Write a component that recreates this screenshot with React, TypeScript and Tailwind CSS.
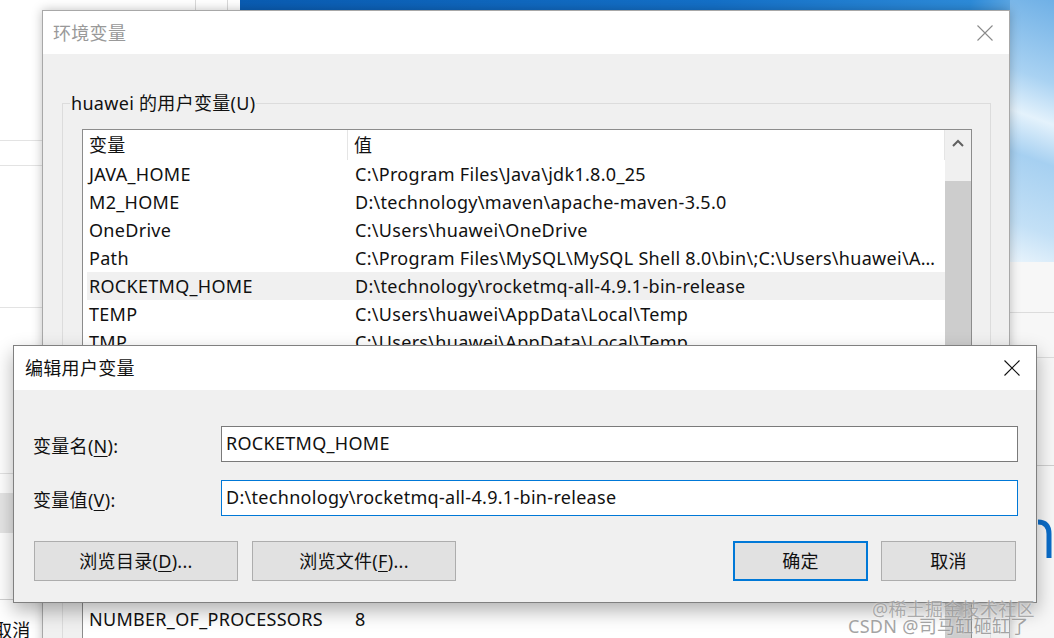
import React from 'react';

type Row = { name: string; value: string; selected?: boolean };

const userRows: Row[] = [
  { name: 'JAVA_HOME', value: 'C:\\Program Files\\Java\\jdk1.8.0_25' },
  { name: 'M2_HOME', value: 'D:\\technology\\maven\\apache-maven-3.5.0' },
  { name: 'OneDrive', value: 'C:\\Users\\huawei\\OneDrive' },
  { name: 'Path', value: 'C:\\Program Files\\MySQL\\MySQL Shell 8.0\\bin\\;C:\\Users\\huawei\\AppData\\Local\\Microsoft\\WindowsApps;' },
  { name: 'ROCKETMQ_HOME', value: 'D:\\technology\\rocketmq-all-4.9.1-bin-release', selected: true },
  { name: 'TEMP', value: 'C:\\Users\\huawei\\AppData\\Local\\Temp' },
  { name: 'TMP', value: 'C:\\Users\\huawei\\AppData\\Local\\Temp' },
];

const systemRows: Row[] = [
  { name: 'ComSpec', value: 'C:\\WINDOWS\\system32\\cmd.exe' },
  { name: 'DriverData', value: 'C:\\Windows\\System32\\Drivers\\DriverData' },
  { name: 'MAVEN_HOME', value: 'D:\\technology\\maven\\apache-maven-3.5.0' },
  { name: 'NUMBER_OF_PROCESSORS', value: '8' },
  { name: 'OS', value: 'Windows_NT' },
];

const CloseIcon = ({ color }: { color: string }) => (
  <svg width="16" height="16" viewBox="0 0 16 16" fill="none" stroke={color} strokeWidth="1.1">
    <path d="M0.5 0.5L15.5 15.5M15.5 0.5L0.5 15.5" />
  </svg>
);

const UpArrow = () => (
  <svg width="12" height="8" viewBox="0 0 12 8" fill="none" stroke="#606060" strokeWidth="2">
    <path d="M1 7L6 2L11 7" />
  </svg>
);

const U = ({ children }: { children: React.ReactNode }) => (
  <span className="underline underline-offset-[3px] decoration-1">{children}</span>
);

const ListView = ({ rows, height }: { rows: Row[]; height: string }) => (
  <div className={`flex border border-[#8c8c8c] bg-white ml-[19px] mr-[18px] ${height}`}>
    <div className="flex-1 flex flex-col overflow-hidden">
      <div className="h-[30px] flex shrink-0">
        <div className="w-[265px] pl-[6px] flex items-center border-r border-[#e5e5e5]">变量</div>
        <div className="flex-1 pl-[6px] flex items-center border-r border-[#e5e5e5]">值</div>
      </div>
      {rows.map((r) => (
        <div
          key={r.name}
          className={`ml-[4px] h-[28px] shrink-0 grid grid-cols-[261px_1fr] items-center ${r.selected ? 'bg-[#f0f0f0]' : ''}`}
        >
          <div className="pl-[2px] truncate">{r.name}</div>
          <div className="pl-[7px] truncate">{r.value}</div>
        </div>
      ))}
    </div>
    <div className="w-[26px] bg-[#f0f0f0] flex flex-col">
      <div className="h-[26px] flex items-center justify-center">
        <UpArrow />
      </div>
      <div className="mt-[25px] h-[200px] bg-[#cdcdcd]" />
    </div>
  </div>
);

const SmallButton = ({ label }: { label: string }) => (
  <div className="w-[88px] h-[30px] border border-[#adadad] bg-[#e1e1e1] flex items-center justify-center">{label}</div>
);

const DialogButton = ({ children, w, primary }: { children: React.ReactNode; w: string; primary?: boolean }) => (
  <div
    className={`${w} h-[40px] bg-[#e1e1e1] flex items-center justify-center ${
      primary ? 'border-2 border-[#0078d7]' : 'border border-[#adadad]'
    }`}
  >
    {children}
  </div>
);

export default function App() {
  return (
    <div className="relative w-[1054px] h-[638px] overflow-hidden bg-white font-['Noto_Sans','Noto_Sans_CJK_SC',sans-serif] text-[18px] tracking-[0.3px] text-[#111] leading-[24px]">
      {/* desktop wallpaper */}
      <div className="absolute left-[240px] top-0 w-[814px] h-[262px] bg-[linear-gradient(100deg,#0a5cb2_0%,#1470c8_55%,#2d8bd9_85%,#8fc4ee_95%,#b8dbf5_100%)]" />
      <div className="absolute left-[1010px] top-0 w-[44px] h-[262px] bg-[linear-gradient(200deg,#6fb0e6_0%,#a9d2f2_30%,#e4f2fc_45%,#a6d0f1_60%,#c3e0f6_85%,#e9f4fc_100%)]" />

      {/* window behind, left */}
      <div className="absolute left-0 top-0 w-[240px] h-[638px] bg-white">
        <div className="absolute left-[195px] top-0 h-[10px] border-l border-[#d9d9d9]" />
        <div className="absolute left-[227px] top-0 h-[10px] border-l border-[#d9d9d9]" />
        <div className="absolute left-0 top-[140px] w-[42px] border-t border-[#e3e3e3]" />
        <div className="absolute left-0 top-[165px] w-[42px] border-t border-[#e3e3e3]" />
        <div className="absolute left-0 top-[307px] w-[42px] border-t border-[#e3e3e3]" />
        <div className="absolute left-0 top-[473px] w-[42px] border-t border-[#e3e3e3]" />
        <div className="absolute left-0 top-[493px] w-[42px] h-[40px] bg-[#e6e6e6]" />
        <div className="absolute left-0 top-[599px] w-[42px] border-t border-[#d0d0d0]" />
        <div className="absolute left-[-6px] top-[618px]">取消</div>
      </div>

      {/* window behind, right */}
      <div className="absolute left-[1010px] top-[262px] w-[44px] h-[376px] bg-[#f7f7f7]">
        <div className="absolute left-0 top-[50px] w-full border-t border-[#dcdcdc]" />
        <div className="absolute left-0 top-[95px] w-full border-t border-[#dcdcdc]" />
        <div className="absolute left-0 top-[203px] w-full border-t border-[#cfcfcf]" />
        <svg className="absolute left-[26px] top-[256px]" width="18" height="42" viewBox="0 0 18 42" fill="none">
          <path d="M2 4Q13 4 13 16L13 40" stroke="#0a6cc8" strokeWidth="5" />
        </svg>
      </div>

      {/* 环境变量 */}
      <div className="absolute left-[42px] top-[10px] w-[968px] h-[700px] border border-[#a8a8a8] bg-[#f0f0f0] shadow-[0_0_10px_rgba(0,0,0,0.25)] flex flex-col">
        <div className="h-[43px] bg-white flex items-center justify-between pl-[10px] pr-[16px] shrink-0">
          <span className="text-[#999]">环境变量</span>
          <CloseIcon color="#8a8a8a" />
        </div>
        <div className="pt-[37px] pl-[19px] pr-[18px] flex flex-col">
          <fieldset className="border border-[#dcdcdc] pb-[14px]">
            <legend className="ml-[7px] px-[1px]">huawei 的用户变量(U)</legend>
            <div className="mt-[14px]">
              <ListView rows={userRows} height="h-[264px]" />
            </div>
            <div className="mt-[12px] mr-[18px] flex justify-end gap-[10px]">
              <SmallButton label="新建(N)..." />
              <SmallButton label="编辑(E)..." />
              <SmallButton label="删除(D)" />
            </div>
          </fieldset>
          <fieldset className="mt-[2px] border border-[#dcdcdc] pb-[14px]">
            <legend className="ml-[7px] px-[1px]">系统变量(S)</legend>
            <div className="mt-[14px]">
              <ListView rows={systemRows} height="h-[200px]" />
            </div>
          </fieldset>
        </div>
      </div>

      {/* 编辑用户变量 */}
      <div className="absolute left-[13px] top-[345px] w-[1024px] border border-[#808080] bg-[#f0f0f0] shadow-[0_8px_18px_rgba(0,0,0,0.3)] flex flex-col">
        <div className="h-[44px] bg-white flex items-center justify-between pl-[11px] pr-[16px]">
          <span>编辑用户变量</span>
          <CloseIcon color="#111" />
        </div>
        <div className="pt-[36px] pb-[21px] pl-[19px] pr-[18px] flex flex-col">
          <div className="grid grid-cols-[188px_1fr] gap-y-[18px] items-center">
            <div className="pt-[4px]">
              变量名(<U>N</U>):
            </div>
            <div className="h-[36px] border border-[#7a7a7a] bg-white pl-[4px] flex items-center pb-[3px]">ROCKETMQ_HOME</div>
            <div className="pt-[4px]">
              变量值(<U>V</U>):
            </div>
            <div className="h-[36px] border border-[#0078d7] bg-white pl-[4px] flex items-center pb-[3px]">
              D:\technology\rocketmq-all-4.9.1-bin-release
            </div>
          </div>
          <div className="mt-[25px] ml-[1px] mr-[2px] flex items-center">
            <DialogButton w="w-[204px]">
              <span>
                浏览目录(<U>D</U>)...
              </span>
            </DialogButton>
            <div className="ml-[14px]">
              <DialogButton w="w-[204px]">
                <span>
                  浏览文件(<U>F</U>)...
                </span>
              </DialogButton>
            </div>
            <div className="ml-auto flex gap-[13px]">
              <DialogButton w="w-[135px]" primary>
                确定
              </DialogButton>
              <DialogButton w="w-[135px]">取消</DialogButton>
            </div>
          </div>
        </div>
      </div>

      {/* watermark */}
      <div className="absolute left-[872px] top-[597px] text-[#a0a0a0] opacity-85 [text-shadow:0_0_2px_#fff]">@稀土掘金技术社区</div>
      <div className="absolute left-[848px] top-[614px] text-[#959595] opacity-85 [text-shadow:0_0_2px_#fff]">CSDN @司马缸砸缸了</div>
    </div>
  );
}
